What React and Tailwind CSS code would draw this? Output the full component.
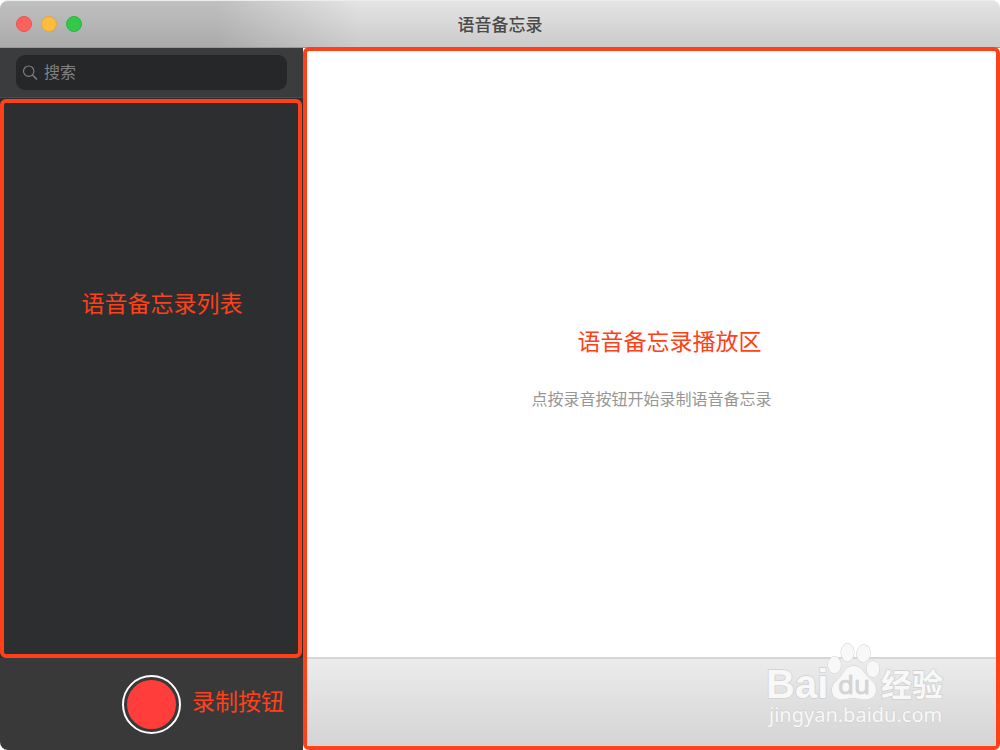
import React from "react";

const SANS = "font-['Liberation_Sans','Noto_Sans_CJK_SC',sans-serif]";

function TitleBar() {
  return (
    <header className="relative flex h-12 shrink-0 items-center justify-center rounded-t-lg border-t border-b border-t-[#ececec] border-b-[#969998] bg-linear-to-b from-[#e4e4e4] to-[#cbcbcb]">
      {/* sidebar shade fading into the bar */}
      <div className="absolute inset-y-0 left-0 w-[360px] rounded-tl-lg bg-linear-to-r from-black/16 from-60% to-transparent" />
      <div className="absolute left-4 flex gap-[9px]">
        <button aria-label="关闭" className="size-4 rounded-full border border-[#e8554f] bg-[#fc615c]" />
        <button aria-label="最小化" className="size-4 rounded-full border border-[#e5a93a] bg-[#fdbc40]" />
        <button aria-label="缩放" className="size-4 rounded-full border border-[#2bb440] bg-[#34c84a]" />
      </div>
      <h1 className="pt-1 text-[17px] leading-6 font-medium text-[#4a4a4a]">语音备忘录</h1>
    </header>
  );
}

function SearchBox() {
  return (
    <div className="border-b border-[#48494b] bg-[#3b3c3e] px-4 py-[7px]">
      <label className="flex h-[35px] items-center gap-[6px] rounded-[9px] bg-[#262729] px-[6px]">
        <svg viewBox="0 0 16 16" className="size-4 shrink-0" fill="none" stroke="#7d7e7f" strokeWidth="1.2">
          <circle cx="6.7" cy="6.2" r="5.2" />
          <path d="M10.5 10l4.4 4.6" strokeWidth="1.5" />
        </svg>
        <input
          type="search"
          aria-label="搜索"
          placeholder="搜索"
          className="w-full min-w-0 bg-transparent text-base leading-6 text-gray-200 outline-none placeholder:text-[#808182]"
        />
      </label>
    </div>
  );
}

function Sidebar() {
  return (
    <aside className="flex w-[303px] shrink-0 flex-col rounded-bl-lg bg-[#393939]">
      <SearchBox />
      <div className="flex flex-1 flex-col bg-[#2d2e30] pt-px pr-px">
        <section className="flex-1 rounded-md border-4 border-[#ff4019] pt-[185px] pl-[22px] text-center">
          <h2 className="text-[23px] leading-8 text-[#ff4019]">语音备忘录列表</h2>
        </section>
      </div>
      <div className="flex h-[92px] items-center justify-end gap-[11px] pr-[19px]">
        <button aria-label="录制" className="size-[59px] rounded-full border-2 border-white p-[3px]">
          <span className="block size-full rounded-full bg-[#ff3e3b]" />
        </button>
        <span className="pb-1 text-[23px] leading-8 text-[#ff4019]">录制按钮</span>
      </div>
    </aside>
  );
}

function Watermark() {
  return (
    <svg
      viewBox="0 0 184 92"
      className="absolute right-[46px] bottom-[18px] h-[92px] w-[184px]"
      fill="#f8f8f8"
      stroke="#d0d0d0"
      strokeWidth="1"
      paintOrder="stroke"
    >
      <ellipse cx="68.5" cy="29" rx="6.5" ry="8.5" />
      <ellipse cx="81.5" cy="16.5" rx="6.5" ry="9" />
      <ellipse cx="97.5" cy="17.5" rx="6.7" ry="8.7" transform="rotate(8 97.5 17.5)" />
      <ellipse cx="107" cy="33" rx="6.5" ry="8" />
      <path d="M87.500 30c-6 0-8.500 4-11 8-3.500 5.500-10.500 9-10.500 16 0 7.500 5.500 10 11 9.500 4-.5 6-1.500 10.500-1.500s6.500 1.500 11 1.500c6.500 0 11.500-3 11.500-10 0-7.500-7.500-10.500-11-16-3-4.500-6-7.500-11.500-7.500z" />
      <text x="0" y="62" fontSize="40" strokeWidth="1.5" className="font-['Liberation_Sans',sans-serif] font-bold">
        Bai
      </text>
      <text x="72" y="58" fontSize="26" fill="#d4d4d4" stroke="#c4c4c4" strokeWidth=".6" className="font-['Noto_Sans',sans-serif]">
        du
      </text>
      <text x="115" y="60" fontSize="31" strokeWidth="1.5" className="font-['Noto_Sans_CJK_SC',sans-serif] font-bold">
        经验
      </text>
      <text x="3" y="86" fontSize="20" strokeWidth="1" className="font-['Noto_Sans',sans-serif]">
        jingyan.baidu.com
      </text>
    </svg>
  );
}

function Player() {
  return (
    <main className="relative -mt-px flex min-w-0 flex-1 flex-col rounded-md border-4 border-[#ff4019] bg-white">
      <div className="flex flex-1 flex-col items-center pt-[275px]">
        <h2 className="pl-9 text-[23px] leading-8 text-[#ff4019]">语音备忘录播放区</h2>
        <p className="mt-[30px] text-base leading-6 text-[#969696]">点按录音按钮开始录制语音备忘录</p>
      </div>
      <footer className="h-[89px] border-t-2 border-[#d5d5d5] bg-linear-to-b from-[#ececec] to-[#d4d4d4]" />
      <Watermark />
    </main>
  );
}

function App() {
  return (
    <div className={`flex min-h-screen flex-col bg-white ${SANS}`}>
      <TitleBar />
      <div className="flex flex-1">
        <Sidebar />
        <Player />
      </div>
    </div>
  );
}

export default App;
